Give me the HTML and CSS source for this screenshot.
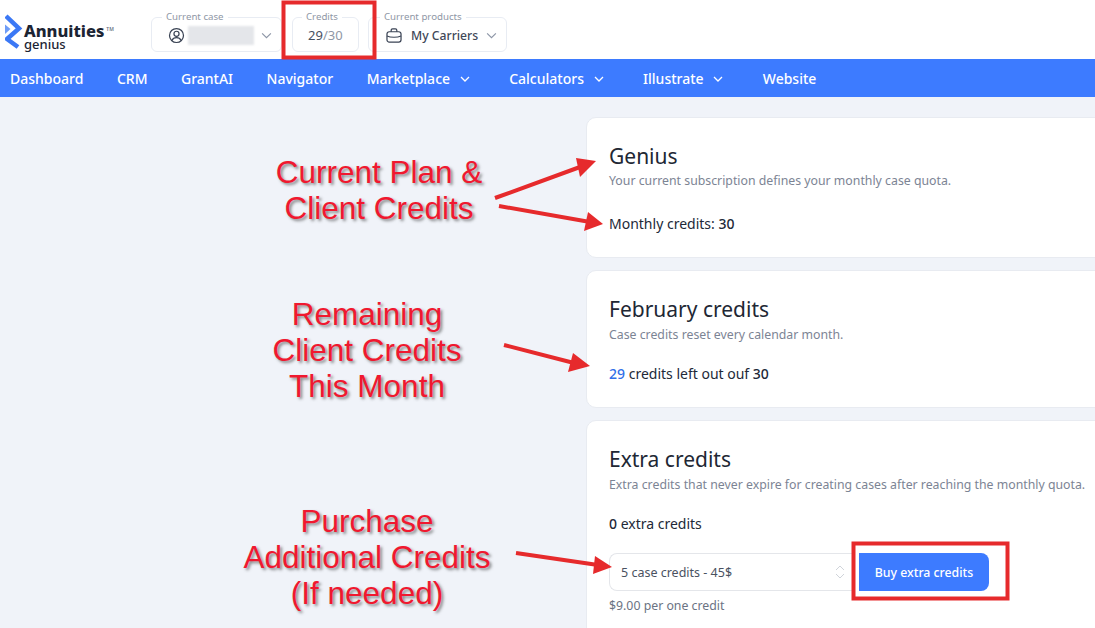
FILE: index.html
```html
<!DOCTYPE html>
<html lang="en">
<head>
<meta charset="utf-8">
<title>Credits</title>
<link rel="stylesheet" href="styles.css">
</head>
<body>
<header class="topbar">
  <div class="logo">
    <svg class="logo-mark" width="18" height="35" viewBox="0 0 18 35"><path d="M1 2L14 14.500L2 25L13 33" fill="none" stroke="#3b78f5" stroke-width="4.500"/><path d="M0 10.500L5.500 15L0 20Z" fill="#6f9df7"/></svg>
    <div class="logo-text"><div class="logo-name">Annuities<sup class="tm">TM</sup></div><div class="logo-sub">genius</div></div>
  </div>
  <fieldset class="field case">
    <legend>Current case</legend>
    <svg class="ico" width="17" height="17" viewBox="0 0 18 18" fill="none" stroke="#3a4354" stroke-width="1.300"><circle cx="9" cy="9" r="7.400"/><circle cx="9" cy="7.200" r="2.700"/><path d="M4.200 14.200c1-2.400 3-3 4.800-3s3.800.6 4.800 3"/></svg>
    <span class="blur"></span>
    <svg class="chev" width="11" height="7" viewBox="0 0 12 8" fill="none" stroke="#8c95a6" stroke-width="1.300"><path d="M1 1.500l5 5 5-5"/></svg>
  </fieldset>
  <fieldset class="field credits">
    <legend>Credits</legend>
    <span class="count">29<span class="count-total">/30</span></span>
  </fieldset>
  <fieldset class="field products">
    <legend>Current products</legend>
    <svg class="ico" width="16" height="15" viewBox="0 0 17 16" fill="none" stroke="#3a4354" stroke-width="1.300"><rect x="1" y="4" width="15" height="11" rx="2.500"/><path d="M5.500 4V2.500C5.500 1.500 6 1 7 1h3c1 0 1.500.5 1.500 1.500V4M1 8.500c4 1.800 11 1.800 15 0"/></svg>
    <span class="prod-name">My Carriers</span>
    <svg class="chev" width="11" height="7" viewBox="0 0 12 8" fill="none" stroke="#8c95a6" stroke-width="1.300"><path d="M1 1.500l5 5 5-5"/></svg>
  </fieldset>
</header>
<nav class="nav">
  <a class="nav-item">Dashboard</a>
  <a class="nav-item">CRM</a>
  <a class="nav-item">GrantAI</a>
  <a class="nav-item">Navigator</a>
  <a class="nav-item nav-drop">Marketplace <svg width="10" height="7" viewBox="0 0 10 7" fill="none" stroke="#fff" stroke-width="1.300"><path d="M1 1l4 4 4-4"/></svg></a>
  <a class="nav-item nav-drop">Calculators <svg width="10" height="7" viewBox="0 0 10 7" fill="none" stroke="#fff" stroke-width="1.300"><path d="M1 1l4 4 4-4"/></svg></a>
  <a class="nav-item nav-drop">Illustrate <svg width="10" height="7" viewBox="0 0 10 7" fill="none" stroke="#fff" stroke-width="1.300"><path d="M1 1l4 4 4-4"/></svg></a>
  <a class="nav-item">Website</a>
</nav>
<main class="main">
  <section class="card card-plan">
    <h2>Genius</h2>
    <p class="sub">Your current subscription defines your monthly case quota.</p>
    <p class="line">Monthly credits: <b>30</b></p>
  </section>
  <section class="card card-month">
    <h2>February credits</h2>
    <p class="sub">Case credits reset every calendar month.</p>
    <p class="line"><b class="blue">29</b> credits left out ouf <b>30</b></p>
  </section>
  <section class="card card-extra">
    <h2>Extra credits</h2>
    <p class="sub">Extra credits that never expire for creating cases after reaching the monthly quota.</p>
    <p class="line"><b>0</b> extra credits</p>
    <div class="buy">
      <div class="select">5 case credits - 45$
        <svg width="10" height="16" viewBox="0 0 10 16" fill="none" stroke="#d0d4da" stroke-width="1"><path d="M1 6l4-4 4 4M1 10l4 4 4-4"/></svg>
      </div>
      <button class="btn">Buy extra credits</button>
    </div>
    <p class="per">$9.00 per one credit</p>
  </section>
</main>
<div class="note note-1">Current Plan &amp;<br>Client Credits</div>
<div class="note note-2">Remaining<br>Client Credits<br>This Month</div>
<div class="note note-3">Purchase<br>Additional Credits<br>(If needed)</div>
<svg class="overlay" width="1095" height="628" viewBox="0 0 1095 628">
  <g fill="none" stroke="#e62a2c" stroke-width="4">
    <rect x="283.500" y="2.500" width="91" height="55"/>
    <rect x="853.500" y="543.500" width="154" height="55"/>
    <path d="M495 198L580 167M499 206L590 222M504 345L574 363M516 553L598 565"/>
  </g>
  <g fill="#e62a2c">
    <path d="M596 161L576 158L580 177Z"/>
    <path d="M603 224L588 212L584 231Z"/>
    <path d="M590 366L573 353L568 372Z"/>
    <path d="M612 567L595 556L593 574Z"/>
  </g>
</svg>
</body>
</html>
```
FILE: styles.css
```css
* { box-sizing: border-box; }
html, body { margin: 0; padding: 0; }
body {
  width: 1095px;
  height: 628px;
  overflow: hidden;
  position: relative;
  background: #f0f3f9;
  font-family: "Noto Sans", sans-serif;
  color: #212734;
}
.topbar {
  height: 59px;
  background: #fff;
  display: flex;
  align-items: flex-start;
  padding-left: 5px;
}
.logo { display: flex; align-items: flex-start; width: 146px; padding-top: 14px; }
.logo-mark { flex: none; }
.logo-text { margin-left: 1px; padding-top: 8px; color: #1c2433; }
.logo-name { font-size: 16.500px; font-weight: 800; line-height: 17px; white-space: nowrap; }
.tm { font-size: 5px; font-weight: 600; vertical-align: 6px; line-height: 0; margin-left: 2px; color: #6b7383; }
.logo-sub { font-size: 13px; font-weight: 500; line-height: 11px; }
.field {
  margin: 10px 0 0;
  padding: 0 0 0 16px;
  height: 42px;
  border: 1px solid #e8ecf3;
  border-radius: 6px;
  display: flex;
  align-items: center;
  background: #fff;
}
.field legend {
  font-size: 9.700px;
  line-height: 14px;
  color: #8f97a6;
  padding: 0 4px;
  margin-left: -6px;
}
.case { width: 131px; }
.credits { width: 67px; margin-left: 10px; padding-left: 15px; }
.products { width: 139px; margin-left: 9px; padding-left: 17px; }
.ico { flex: none; margin-top: -5px; }
.blur { width: 66px; height: 19px; margin: -5px 0 0 3px; background: #e4e6ea; filter: blur(1px); flex: none; }
.chev { margin: -5px 0 0 7px; flex: none; }
.count { font-size: 13px; color: #46505f; margin-top: -5px; }
.count-total { color: #8f97a6; }
.prod-name { font-size: 12.200px; font-weight: 500; color: #3f4858; margin: -5px 0 0 9px; white-space: nowrap; }
.products .chev { margin-left: 8px; }
.nav {
  height: 38px;
  background: #3d7bff;
  display: flex;
  align-items: center;
  padding-left: 10px;
  gap: 33.500px;
}
.nav-item { color: #fff; font-size: 14px; font-weight: 500; white-space: nowrap; }
.nav-drop { padding-right: 6px; }
.nav-item svg { margin-left: 6px; vertical-align: 1px; }
.main { margin: 20px 0 0 586px; width: 560px; }
.card {
  background: #fff;
  border: 1px solid #e8ebf1;
  border-radius: 10px;
  padding: 25px 22px;
  margin-bottom: 12px;
}
.card-plan { height: 141px; }
.card-month { height: 138px; }
.card-extra { height: 260px; }
h2 { margin: 0 0 3px; font-size: 21px; font-weight: 400; line-height: 27px; color: #212734; }
.card-plan h2 { margin-bottom: 2px; }
.sub { margin: 0; font-size: 12.300px; line-height: 18px; color: #7c8494; }
.line { margin: 20px 0 0; font-size: 14px; line-height: 19px; color: #222938; }
.card-plan .line { margin-top: 24px; }
.line b { font-weight: 500; }
.blue { color: #2f6fe8; }
.buy { display: flex; margin-top: 20px; }
.select {
  width: 245px;
  height: 38px;
  border: 1px solid #e4e6ea;
  border-right: 0;
  border-radius: 8px 0 0 8px;
  display: flex;
  align-items: center;
  justify-content: space-between;
  padding: 0 9px 0 11px;
  font-size: 12.500px;
  color: #4a5261;
}
.btn {
  width: 130px;
  height: 38px;
  border: 0;
  border-radius: 0 8px 8px 0;
  background: #3d7bff;
  color: #fff;
  font: 500 12.300px "Noto Sans", sans-serif;
  margin-left: 5px;
}
.per { margin: 6px 0 0; font-size: 12.300px; line-height: 18px; color: #6b7383; }
.note {
  position: absolute;
  text-align: center;
  font-family: "Liberation Sans", sans-serif;
  font-size: 31.500px;
  line-height: 36px;
  color: #f0182f;
  text-shadow: 2px 2px 3px rgba(60, 60, 60, .6);
  white-space: nowrap;
}
.note-1 { left: 229px; width: 300px; top: 154px; }
.note-2 { left: 217px; width: 300px; top: 296px; }
.note-3 { left: 217px; width: 300px; top: 503px; }
.overlay { position: absolute; left: 0; top: 0; pointer-events: none; }
```
